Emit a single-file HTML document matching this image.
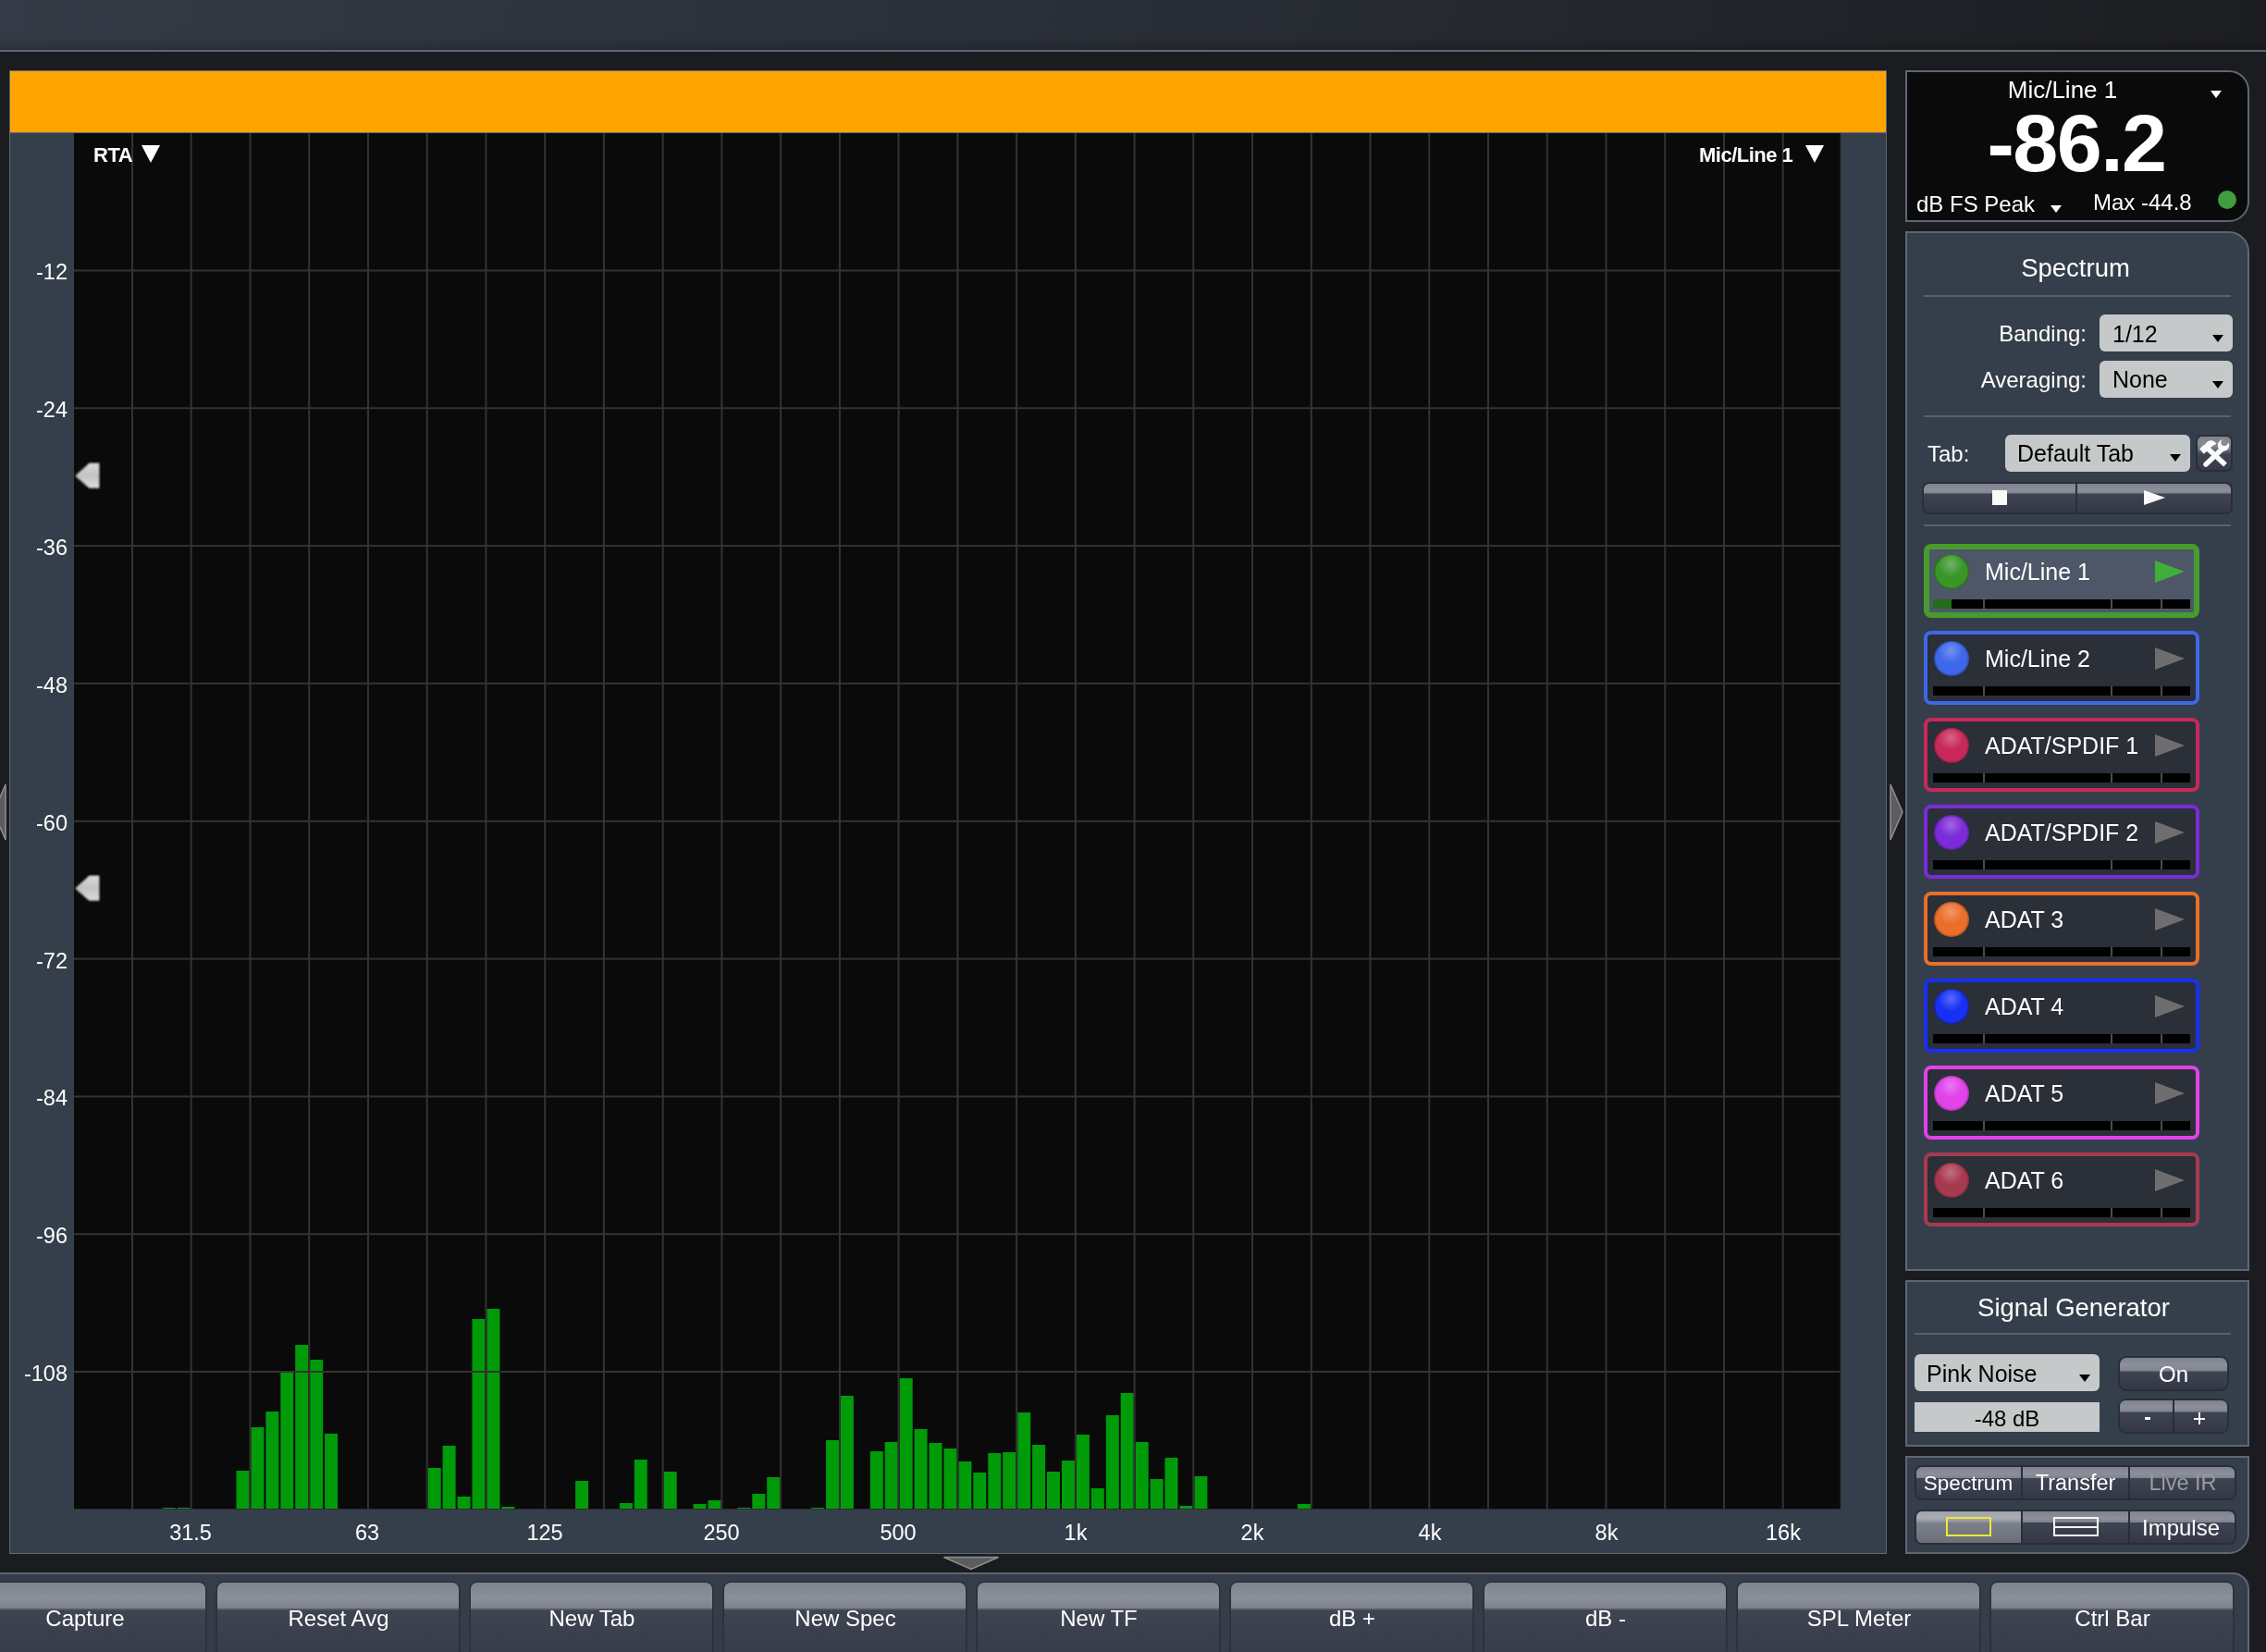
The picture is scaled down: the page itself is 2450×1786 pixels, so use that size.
<!DOCTYPE html>
<html><head><meta charset="utf-8"><style>
*{margin:0;padding:0;box-sizing:border-box}
html,body{width:2450px;height:1786px;overflow:hidden;background:#1b1c20;font-family:"Liberation Sans",sans-serif;color:#fff}
.abs{position:absolute}
.t{position:absolute;white-space:nowrap;will-change:transform}
#top{position:absolute;left:0;top:0;width:2450px;height:54px;background:linear-gradient(rgba(0,0,0,0) 75%,rgba(0,0,0,.18) 100%),linear-gradient(100deg,#343b46 0%,#2a2f38 45%,#1c1d21 100%)}
#topline{position:absolute;left:0;top:54px;width:2450px;height:2px;background:#5e6672}
#graph{position:absolute;left:10px;top:76px;width:2030px;height:1604px;background:#353f4b;border:1px solid #5d6875}
#orange{position:absolute;left:11px;top:77px;width:2028px;height:66px;background:#ffa400}
#oline{position:absolute;left:11px;top:143px;width:2028px;height:1px;background:#5d6875}
.tri{position:absolute;width:0;height:0;border-left:10px solid transparent;border-right:10px solid transparent;border-top:19px solid #fff}
#meter{position:absolute;left:2060px;top:76px;width:372px;height:164px;background:#0a0a0a;border:2px solid #5f6773;border-radius:0 22px 22px 0}
.panel{position:absolute;left:2060px;width:372px;background:#353f4b;border:2px solid #5f6773}
.sep{position:absolute;height:2px;background:#56616d}
.dd{position:absolute;background:#c6c9ca;border-radius:6px}
.ddt{position:absolute;width:0;height:0;border-left:6px solid transparent;border-right:6px solid transparent;border-top:8px solid #000}
.ddtw{position:absolute;width:0;height:0;border-left:6px solid transparent;border-right:6px solid transparent;border-top:8px solid #fff}
.ch{position:absolute;left:2080px;width:298px;height:80px;border:4px solid;border-radius:8px;background:#2a2f38}
.ch.sel{border-width:6px;background:#4d5767}
.dot{position:absolute;left:7px;top:7px;width:38px;height:38px;border-radius:50%;box-shadow:inset 0 0 1px 1.5px rgba(0,0,0,.22),0 0 1px rgba(0,0,0,.3)}
.ch.sel .dot{left:5px;top:5px}
.play{position:absolute;left:246px;top:14px;width:0;height:0;border-top:12px solid transparent;border-bottom:12px solid transparent;border-left:32px solid #6e6e6e}
.play.g{border-left-color:#3fae3a;left:244px;top:12px}
.meter{position:absolute;left:6px;top:56px;width:278px;height:10px;background:#000}
.ch.sel .meter{left:4px;top:54px}
.meter i{position:absolute;top:0;width:2px;height:10px;background:#4a4d52}
.lvl{position:absolute;left:0;top:0;width:20px;height:10px;background:#256b1c}
.gb{position:absolute;--hl:14px;background:linear-gradient(#7f838d 0,#8b8f99 calc(var(--hl)*.55),#80848e var(--hl),#3f4452 calc(var(--hl) + 1px),#343846 100%);border:2px solid #2a2e39}
.gb.sel{background:linear-gradient(#9a9ea8 0,#a6aab2 calc(var(--hl)*.55),#8e929b var(--hl),#7d818b calc(var(--hl) + 1px),#6a6e78 100%)}
.gbox{position:absolute;background:#2a2e39;overflow:hidden;padding:0}
.seg{position:absolute;top:2px;bottom:2px;--hl:14px;background:linear-gradient(#7f838d 0,#8b8f99 calc(var(--hl)*.55),#80848e calc(var(--hl) - 2px),#3f4452 calc(var(--hl) - 1px),#343846 100%)}
.seg:first-child{border-radius:6px 0 0 6px}
.seg:last-child{border-radius:0 6px 6px 0}
.seg.sel{background:linear-gradient(#a0a4ac 0,#a8acb4 calc(var(--hl)*.55),#8e929b calc(var(--hl) - 2px),#7c808a calc(var(--hl) - 1px),#6b6f79 100%)}
.tbtn{position:absolute;top:1711px;width:261px;height:90px;border-radius:7px 7px 0 0;background:linear-gradient(#7f838d 0px,#8b8f99 16px,#80848e 27px,#3f4452 30px,#363a48 90px);box-shadow:0 0 0 1.5px #2a2f3a}
</style></head><body>
<div id="top"></div><div id="topline"></div>
<div id="graph"></div>
<div id="orange"></div><div id="oline"></div>
<svg width="2450" height="1786" style="position:absolute;left:0;top:0">
<rect x="80" y="144" width="1910" height="1487" fill="#0a0a0a"/>
<rect x="80" y="1631" width="1910" height="1" fill="#2c2c2c"/>
<rect x="1989.5" y="144" width="1.5" height="1487.5" fill="#333"/>
<rect x="175.8" y="1630" width="14" height="1" fill="#009b08"/>
<rect x="191.8" y="1630" width="14" height="1" fill="#009b08"/>
<rect x="255.5" y="1590" width="14" height="41" fill="#009b08"/>
<rect x="271.4" y="1543" width="14" height="88" fill="#009b08"/>
<rect x="287.4" y="1526" width="14" height="105" fill="#009b08"/>
<rect x="303.3" y="1484" width="14" height="147" fill="#009b08"/>
<rect x="319.2" y="1454" width="14" height="177" fill="#009b08"/>
<rect x="335.2" y="1470" width="14" height="161" fill="#009b08"/>
<rect x="351.1" y="1550" width="14" height="81" fill="#009b08"/>
<rect x="462.7" y="1587" width="14" height="44" fill="#009b08"/>
<rect x="478.6" y="1563" width="14" height="68" fill="#009b08"/>
<rect x="494.6" y="1618" width="14" height="13" fill="#009b08"/>
<rect x="510.5" y="1426" width="14" height="205" fill="#009b08"/>
<rect x="526.4" y="1415" width="14" height="216" fill="#009b08"/>
<rect x="542.4" y="1629" width="14" height="2" fill="#009b08"/>
<rect x="622.1" y="1601" width="14" height="30" fill="#009b08"/>
<rect x="669.9" y="1625" width="14" height="6" fill="#009b08"/>
<rect x="685.8" y="1578" width="14" height="53" fill="#009b08"/>
<rect x="717.7" y="1591" width="14" height="40" fill="#009b08"/>
<rect x="749.5" y="1626" width="14" height="5" fill="#009b08"/>
<rect x="765.5" y="1622" width="14" height="9" fill="#009b08"/>
<rect x="797.4" y="1630" width="14" height="1" fill="#009b08"/>
<rect x="813.3" y="1615" width="14" height="16" fill="#009b08"/>
<rect x="829.2" y="1597" width="14" height="34" fill="#009b08"/>
<rect x="877.0" y="1630" width="14" height="1" fill="#009b08"/>
<rect x="893.0" y="1557" width="14" height="74" fill="#009b08"/>
<rect x="908.9" y="1509" width="14" height="122" fill="#009b08"/>
<rect x="940.8" y="1569" width="14" height="62" fill="#009b08"/>
<rect x="956.7" y="1559" width="14" height="72" fill="#009b08"/>
<rect x="972.7" y="1490" width="14" height="141" fill="#009b08"/>
<rect x="988.6" y="1545" width="14" height="86" fill="#009b08"/>
<rect x="1004.5" y="1560" width="14" height="71" fill="#009b08"/>
<rect x="1020.5" y="1566" width="14" height="65" fill="#009b08"/>
<rect x="1036.4" y="1580" width="14" height="51" fill="#009b08"/>
<rect x="1052.3" y="1592" width="14" height="39" fill="#009b08"/>
<rect x="1068.3" y="1571" width="14" height="60" fill="#009b08"/>
<rect x="1084.2" y="1570" width="14" height="61" fill="#009b08"/>
<rect x="1100.2" y="1527" width="14" height="104" fill="#009b08"/>
<rect x="1116.1" y="1562" width="14" height="69" fill="#009b08"/>
<rect x="1132.0" y="1591" width="14" height="40" fill="#009b08"/>
<rect x="1148.0" y="1579" width="14" height="52" fill="#009b08"/>
<rect x="1163.9" y="1551" width="14" height="80" fill="#009b08"/>
<rect x="1179.8" y="1609" width="14" height="22" fill="#009b08"/>
<rect x="1195.8" y="1530" width="14" height="101" fill="#009b08"/>
<rect x="1211.7" y="1506" width="14" height="125" fill="#009b08"/>
<rect x="1227.7" y="1559" width="14" height="72" fill="#009b08"/>
<rect x="1243.6" y="1599" width="14" height="32" fill="#009b08"/>
<rect x="1259.5" y="1576" width="14" height="55" fill="#009b08"/>
<rect x="1275.5" y="1628" width="14" height="3" fill="#009b08"/>
<rect x="1291.4" y="1596" width="14" height="35" fill="#009b08"/>
<rect x="1403.0" y="1626" width="14" height="5" fill="#009b08"/>
<rect x="142.0" y="144" width="2" height="1487" fill="#333"/>
<rect x="205.7" y="144" width="2" height="1487" fill="#333"/>
<rect x="269.5" y="144" width="2" height="1487" fill="#333"/>
<rect x="333.2" y="144" width="2" height="1487" fill="#333"/>
<rect x="397.0" y="144" width="2" height="1487" fill="#333"/>
<rect x="460.7" y="144" width="2" height="1487" fill="#333"/>
<rect x="524.4" y="144" width="2" height="1487" fill="#333"/>
<rect x="588.2" y="144" width="2" height="1487" fill="#333"/>
<rect x="651.9" y="144" width="2" height="1487" fill="#333"/>
<rect x="715.7" y="144" width="2" height="1487" fill="#333"/>
<rect x="779.4" y="144" width="2" height="1487" fill="#333"/>
<rect x="843.1" y="144" width="2" height="1487" fill="#333"/>
<rect x="906.9" y="144" width="2" height="1487" fill="#333"/>
<rect x="970.6" y="144" width="2" height="1487" fill="#333"/>
<rect x="1034.4" y="144" width="2" height="1487" fill="#333"/>
<rect x="1098.1" y="144" width="2" height="1487" fill="#333"/>
<rect x="1161.8" y="144" width="2" height="1487" fill="#333"/>
<rect x="1225.6" y="144" width="2" height="1487" fill="#333"/>
<rect x="1289.3" y="144" width="2" height="1487" fill="#333"/>
<rect x="1353.1" y="144" width="2" height="1487" fill="#333"/>
<rect x="1416.8" y="144" width="2" height="1487" fill="#333"/>
<rect x="1480.5" y="144" width="2" height="1487" fill="#333"/>
<rect x="1544.3" y="144" width="2" height="1487" fill="#333"/>
<rect x="1608.0" y="144" width="2" height="1487" fill="#333"/>
<rect x="1671.8" y="144" width="2" height="1487" fill="#333"/>
<rect x="1735.5" y="144" width="2" height="1487" fill="#333"/>
<rect x="1799.2" y="144" width="2" height="1487" fill="#333"/>
<rect x="1863.0" y="144" width="2" height="1487" fill="#333"/>
<rect x="1926.7" y="144" width="2" height="1487" fill="#333"/>
<rect x="80" y="291.5" width="1910" height="2" fill="#333"/>
<rect x="80" y="440.3" width="1910" height="2" fill="#333"/>
<rect x="80" y="589.1" width="1910" height="2" fill="#333"/>
<rect x="80" y="737.9" width="1910" height="2" fill="#333"/>
<rect x="80" y="886.8" width="1910" height="2" fill="#333"/>
<rect x="80" y="1035.6" width="1910" height="2" fill="#333"/>
<rect x="80" y="1184.4" width="1910" height="2" fill="#333"/>
<rect x="80" y="1333.2" width="1910" height="2" fill="#333"/>
<rect x="80" y="1482.0" width="1910" height="2" fill="#333"/>
<defs><filter id="bl" x="-20%" y="-20%" width="140%" height="140%"><feGaussianBlur stdDeviation="1.1"/></filter><linearGradient id="mk" x1="0" y1="0" x2="0" y2="1"><stop offset="0" stop-color="#dcdcdc"/><stop offset=".5" stop-color="#c2c2c2"/><stop offset="1" stop-color="#dedede"/></linearGradient></defs>
<polygon points="81,514.5 96.5,500.5 107.5,500.5 107.5,528 96.5,528" fill="url(#mk)" stroke="#000" stroke-width="1" filter="url(#bl)"/>
<polygon points="81,960.5 96.5,946.5 107.5,946.5 107.5,974 96.5,974" fill="url(#mk)" stroke="#000" stroke-width="1" filter="url(#bl)"/>
<polygon points="-7,878 6,848 6,908" fill="#5c5c5e" stroke="#8e8e8e" stroke-width="1.5"/>
<polygon points="2057,878 2044,848 2044,908" fill="#5c5c5e" stroke="#8e8e8e" stroke-width="1.5"/>
<polygon points="1020.5,1683.5 1079.5,1683.5 1050,1696.5" fill="#5c5c5e" stroke="#8e8e8e" stroke-width="1.5"/>
</svg>
<div class="t" style="left:2.5px;width:70px;text-align:right;top:283.4px;font-size:23.5px;line-height:23.5px;color:#fff;">-12</div>
<div class="t" style="left:2.5px;width:70px;text-align:right;top:432.2px;font-size:23.5px;line-height:23.5px;color:#fff;">-24</div>
<div class="t" style="left:2.5px;width:70px;text-align:right;top:581.0px;font-size:23.5px;line-height:23.5px;color:#fff;">-36</div>
<div class="t" style="left:2.5px;width:70px;text-align:right;top:729.8px;font-size:23.5px;line-height:23.5px;color:#fff;">-48</div>
<div class="t" style="left:2.5px;width:70px;text-align:right;top:878.7px;font-size:23.5px;line-height:23.5px;color:#fff;">-60</div>
<div class="t" style="left:2.5px;width:70px;text-align:right;top:1027.5px;font-size:23.5px;line-height:23.5px;color:#fff;">-72</div>
<div class="t" style="left:2.5px;width:70px;text-align:right;top:1176.3px;font-size:23.5px;line-height:23.5px;color:#fff;">-84</div>
<div class="t" style="left:2.5px;width:70px;text-align:right;top:1325.1px;font-size:23.5px;line-height:23.5px;color:#fff;">-96</div>
<div class="t" style="left:2.5px;width:70px;text-align:right;top:1473.9px;font-size:23.5px;line-height:23.5px;color:#fff;">-108</div>
<div class="t" style="left:156.0px;width:100px;text-align:center;top:1646.1px;font-size:23.5px;line-height:23.5px;color:#fff;">31.5</div>
<div class="t" style="left:347.4px;width:100px;text-align:center;top:1646.1px;font-size:23.5px;line-height:23.5px;color:#fff;">63</div>
<div class="t" style="left:538.7px;width:100px;text-align:center;top:1646.1px;font-size:23.5px;line-height:23.5px;color:#fff;">125</div>
<div class="t" style="left:730.0px;width:100px;text-align:center;top:1646.1px;font-size:23.5px;line-height:23.5px;color:#fff;">250</div>
<div class="t" style="left:921.4px;width:100px;text-align:center;top:1646.1px;font-size:23.5px;line-height:23.5px;color:#fff;">500</div>
<div class="t" style="left:1112.8px;width:100px;text-align:center;top:1646.1px;font-size:23.5px;line-height:23.5px;color:#fff;">1k</div>
<div class="t" style="left:1304.1px;width:100px;text-align:center;top:1646.1px;font-size:23.5px;line-height:23.5px;color:#fff;">2k</div>
<div class="t" style="left:1495.5px;width:100px;text-align:center;top:1646.1px;font-size:23.5px;line-height:23.5px;color:#fff;">4k</div>
<div class="t" style="left:1686.8px;width:100px;text-align:center;top:1646.1px;font-size:23.5px;line-height:23.5px;color:#fff;">8k</div>
<div class="t" style="left:1878.1px;width:100px;text-align:center;top:1646.1px;font-size:23.5px;line-height:23.5px;color:#fff;">16k</div>
<div class="t" style="left:100.5px;top:156.9px;font-size:22px;line-height:22px;color:#fff;font-weight:bold;letter-spacing:-0.5px">RTA</div>
<div class="tri" style="left:153px;top:157px"></div>
<div class="t" style="left:1837.0px;top:156.9px;font-size:22px;line-height:22px;color:#fff;font-weight:bold;letter-spacing:-0.5px">Mic/Line 1</div>
<div class="tri" style="left:1952px;top:157px"></div>
<div id="meter"></div>
<div class="t" style="left:2080.0px;width:300px;text-align:center;top:84.0px;font-size:26px;line-height:26px;color:#fff;">Mic/Line 1</div>
<div class="ddtw" style="left:2390px;top:98px"></div>
<div class="t" style="left:2075.0px;width:340px;text-align:center;top:110.5px;font-size:88px;line-height:88px;color:#fff;font-weight:bold;letter-spacing:-1.5px">-86.2</div>
<div class="t" style="left:2072.0px;top:208.7px;font-size:24px;line-height:24px;color:#fff;">dB FS Peak</div>
<div class="ddtw" style="left:2217px;top:222px"></div>
<div class="t" style="left:2263.0px;top:206.7px;font-size:24px;line-height:24px;color:#fff;">Max -44.8</div>
<div class="abs" style="left:2398px;top:206px;width:20px;height:20px;border-radius:50%;background:#3f9c3f"></div>
<div class="panel" style="top:250px;height:1124px;border-radius:0 22px 0 0"></div>
<div class="t" style="left:2093.5px;width:300px;text-align:center;top:276.4px;font-size:27.5px;line-height:27.5px;color:#fff;">Spectrum</div>
<div class="sep" style="left:2080px;top:319px;width:332px"></div>
<div class="t" style="left:2056.0px;width:200px;text-align:right;top:348.7px;font-size:24px;line-height:24px;color:#fff;">Banding:</div>
<div class="dd" style="left:2270px;top:340px;width:144px;height:40px"></div>
<div class="t" style="left:2284.0px;top:348.6px;font-size:25px;line-height:25px;color:#000;">1/12</div>
<div class="ddt" style="left:2392px;top:362px"></div>
<div class="t" style="left:2056.0px;width:200px;text-align:right;top:398.7px;font-size:24px;line-height:24px;color:#fff;">Averaging:</div>
<div class="dd" style="left:2270px;top:390px;width:144px;height:40px"></div>
<div class="t" style="left:2284.0px;top:398.4px;font-size:25px;line-height:25px;color:#000;">None</div>
<div class="ddt" style="left:2392px;top:412px"></div>
<div class="sep" style="left:2080px;top:449px;width:332px"></div>
<div class="t" style="left:2084.0px;top:478.7px;font-size:24px;line-height:24px;color:#fff;">Tab:</div>
<div class="dd" style="left:2168px;top:470px;width:200px;height:40px"></div>
<div class="t" style="left:2181.0px;top:477.8px;font-size:25px;line-height:25px;color:#000;">Default Tab</div>
<div class="ddt" style="left:2346px;top:491px"></div>
<div class="abs" style="left:2374px;top:470px;width:40px;height:40px;border-radius:7px;border:2px solid #2a2e39;background:linear-gradient(#7f838d 0,#888c96 8px,#6e727d 14px,#3f4452 19px,#363a48 100%)"></div>
<svg class="abs" style="left:2374px;top:470px" width="40" height="40" viewBox="0 0 40 40">
<defs><mask id="wm"><rect width="40" height="40" fill="#fff"/><circle cx="31" cy="8.5" r="3.6" fill="#000"/><polygon points="31,8.5 40,3 40,10" fill="#000"/></mask></defs>
<line x1="13" y1="15" x2="32" y2="32.5" stroke="#fafafa" stroke-width="5.5"/>
<polygon points="4.2,15.3 8.8,20.8 17,13 22.5,9.8 20,7.2 16.5,6 12.5,7.5 10,10.5 8,11.5" fill="#fafafa"/>
<line x1="11" y1="32" x2="29" y2="15" stroke="#fafafa" stroke-width="5.5" stroke-linecap="round"/>
<circle cx="30" cy="11.5" r="6.2" fill="#fafafa" mask="url(#wm)"/>
</svg>
<div class="gbox" style="left:2078px;top:521px;width:336px;height:35px;border-radius:7px"><div class="seg" style="left:2px;width:164px;--hl:12px"></div><div class="seg" style="left:168px;width:166px;--hl:12px"></div></div>
<div class="abs" style="left:2154px;top:530px;width:16px;height:16px;background:#fafafa"></div>
<div class="abs" style="left:2318px;top:530px;width:0;height:0;border-top:8.3px solid transparent;border-bottom:8.3px solid transparent;border-left:23.5px solid #fafafa"></div>
<div class="sep" style="left:2080px;top:567px;width:332px"></div>
<div class="ch sel" style="top:588px;border-color:#479c2d"><div class="dot" style="background:radial-gradient(circle at 48% 28%, rgba(255,255,255,.28) 0, rgba(255,255,255,0) 40%), #3b962a"></div><div class="play g"></div><div class="meter"><div class="lvl"></div><i style="left:53.5px"></i><i style="left:191.5px"></i><i style="left:245.5px"></i></div></div>
<div class="t" style="left:2146.0px;top:606.3px;font-size:25px;line-height:25px;color:#fff;">Mic/Line 1</div>
<div class="ch" style="top:682px;border-color:#3e67ea"><div class="dot" style="background:radial-gradient(circle at 48% 28%, rgba(255,255,255,.28) 0, rgba(255,255,255,0) 40%), #3e67ea"></div><div class="play"></div><div class="meter"><i style="left:53.5px"></i><i style="left:191.5px"></i><i style="left:245.5px"></i></div></div>
<div class="t" style="left:2146.0px;top:700.3px;font-size:25px;line-height:25px;color:#fff;">Mic/Line 2</div>
<div class="ch" style="top:776px;border-color:#c8285a"><div class="dot" style="background:radial-gradient(circle at 48% 28%, rgba(255,255,255,.28) 0, rgba(255,255,255,0) 40%), #c8285a"></div><div class="play"></div><div class="meter"><i style="left:53.5px"></i><i style="left:191.5px"></i><i style="left:245.5px"></i></div></div>
<div class="t" style="left:2146.0px;top:794.3px;font-size:25px;line-height:25px;color:#fff;">ADAT/SPDIF 1</div>
<div class="ch" style="top:870px;border-color:#7b2bd8"><div class="dot" style="background:radial-gradient(circle at 48% 28%, rgba(255,255,255,.28) 0, rgba(255,255,255,0) 40%), #7b2bd8"></div><div class="play"></div><div class="meter"><i style="left:53.5px"></i><i style="left:191.5px"></i><i style="left:245.5px"></i></div></div>
<div class="t" style="left:2146.0px;top:888.3px;font-size:25px;line-height:25px;color:#fff;">ADAT/SPDIF 2</div>
<div class="ch" style="top:964px;border-color:#e96f2b"><div class="dot" style="background:radial-gradient(circle at 48% 28%, rgba(255,255,255,.28) 0, rgba(255,255,255,0) 40%), #e96f2b"></div><div class="play"></div><div class="meter"><i style="left:53.5px"></i><i style="left:191.5px"></i><i style="left:245.5px"></i></div></div>
<div class="t" style="left:2146.0px;top:982.3px;font-size:25px;line-height:25px;color:#fff;">ADAT 3</div>
<div class="ch" style="top:1058px;border-color:#1830f4"><div class="dot" style="background:radial-gradient(circle at 48% 28%, rgba(255,255,255,.28) 0, rgba(255,255,255,0) 40%), #1830f4"></div><div class="play"></div><div class="meter"><i style="left:53.5px"></i><i style="left:191.5px"></i><i style="left:245.5px"></i></div></div>
<div class="t" style="left:2146.0px;top:1076.3px;font-size:25px;line-height:25px;color:#fff;">ADAT 4</div>
<div class="ch" style="top:1152px;border-color:#e142ea"><div class="dot" style="background:radial-gradient(circle at 48% 28%, rgba(255,255,255,.28) 0, rgba(255,255,255,0) 40%), #e142ea"></div><div class="play"></div><div class="meter"><i style="left:53.5px"></i><i style="left:191.5px"></i><i style="left:245.5px"></i></div></div>
<div class="t" style="left:2146.0px;top:1170.3px;font-size:25px;line-height:25px;color:#fff;">ADAT 5</div>
<div class="ch" style="top:1246px;border-color:#a83a50"><div class="dot" style="background:radial-gradient(circle at 48% 28%, rgba(255,255,255,.28) 0, rgba(255,255,255,0) 40%), #a83a50"></div><div class="play"></div><div class="meter"><i style="left:53.5px"></i><i style="left:191.5px"></i><i style="left:245.5px"></i></div></div>
<div class="t" style="left:2146.0px;top:1264.3px;font-size:25px;line-height:25px;color:#fff;">ADAT 6</div>
<div class="panel" style="top:1384px;height:180px"></div>
<div class="t" style="left:2072.0px;width:340px;text-align:center;top:1399.7px;font-size:27.5px;line-height:27.5px;color:#fff;">Signal Generator</div>
<div class="sep" style="left:2070px;top:1441px;width:342px"></div>
<div class="dd" style="left:2070px;top:1464px;width:200px;height:40px"></div>
<div class="t" style="left:2083.0px;top:1472.8px;font-size:25px;line-height:25px;color:#000;">Pink Noise</div>
<div class="ddt" style="left:2248px;top:1486px"></div>
<div class="abs" style="left:2070px;top:1516px;width:200px;height:32px;background:#c6c9ca"></div>
<div class="t" style="left:2070.0px;width:200px;text-align:center;top:1521.7px;font-size:24px;line-height:24px;color:#000;">-48 dB</div>
<div class="gb" style="left:2290px;top:1466px;width:120px;height:38px;border-radius:9px;--hl:14px"></div>
<div class="t" style="left:2290.0px;width:120px;text-align:center;top:1473.7px;font-size:24px;line-height:24px;color:#fff;">On</div>
<div class="gbox" style="left:2290px;top:1512px;width:120px;height:38px;border-radius:9px"><div class="seg" style="left:2px;width:57px;--hl:14px"></div><div class="seg" style="left:61px;width:57px;--hl:14px"></div></div>
<div class="abs" style="left:2319px;top:1531.5px;width:6px;height:3px;background:#fafafa"></div>
<div class="abs" style="left:2372px;top:1532.5px;width:12px;height:2px;background:#fafafa"></div>
<div class="abs" style="left:2377px;top:1527px;width:2px;height:13px;background:#fafafa"></div>
<div class="panel" style="top:1574px;height:106px;border-radius:0 0 22px 0"></div>
<div class="gbox" style="left:2070px;top:1584px;width:348px;height:38px;border-radius:8px"><div class="seg" style="left:2px;width:113px;--hl:13.5px"></div><div class="seg" style="left:117px;width:114px;--hl:13.5px"></div><div class="seg" style="left:233px;width:113px;--hl:13.5px"></div></div>
<div class="t" style="left:2070.0px;width:116px;text-align:center;top:1593.3px;font-size:22.5px;line-height:22.5px;color:#fff;">Spectrum</div>
<div class="t" style="left:2186.0px;width:116px;text-align:center;top:1592.4px;font-size:23.5px;line-height:23.5px;color:#fff;">Transfer</div>
<div class="t" style="left:2302.0px;width:116px;text-align:center;top:1592.4px;font-size:23.5px;line-height:23.5px;color:#9a9ca2;">Live IR</div>
<div class="gbox" style="left:2070px;top:1632px;width:348px;height:38px;border-radius:8px"><div class="seg sel" style="left:2px;width:113px;--hl:13.5px"></div><div class="seg" style="left:117px;width:114px;--hl:13.5px"></div><div class="seg" style="left:233px;width:113px;--hl:13.5px"></div></div>
<div class="t" style="left:2300.0px;width:116px;text-align:center;top:1640.0px;font-size:24px;line-height:24px;color:#fff;">Impulse</div>
<div class="abs" style="left:2104px;top:1640px;width:49px;height:21px;border:2px solid #f0e836"></div>
<div class="abs" style="left:2220px;top:1640px;width:49px;height:21px;border:2px solid #f4f4f4"></div>
<div class="abs" style="left:2220px;top:1649.5px;width:49px;height:2px;background:#f4f4f4"></div>
<div class="abs" style="left:0;top:1700px;width:2432px;height:86px;background:#343d48;border-top:2px solid #5d6875;border-right:2px solid #5d6875;border-radius:0 18px 0 0"></div>
<div class="tbtn" style="left:-39px"></div>
<div class="t" style="left:-38.5px;width:260px;text-align:center;top:1738.3px;font-size:24px;line-height:24px;color:#fff;">Capture</div>
<div class="tbtn" style="left:235px"></div>
<div class="t" style="left:235.5px;width:260px;text-align:center;top:1738.3px;font-size:24px;line-height:24px;color:#fff;">Reset Avg</div>
<div class="tbtn" style="left:509px"></div>
<div class="t" style="left:509.5px;width:260px;text-align:center;top:1738.3px;font-size:24px;line-height:24px;color:#fff;">New Tab</div>
<div class="tbtn" style="left:783px"></div>
<div class="t" style="left:783.5px;width:260px;text-align:center;top:1738.3px;font-size:24px;line-height:24px;color:#fff;">New Spec</div>
<div class="tbtn" style="left:1057px"></div>
<div class="t" style="left:1057.5px;width:260px;text-align:center;top:1738.3px;font-size:24px;line-height:24px;color:#fff;">New TF</div>
<div class="tbtn" style="left:1331px"></div>
<div class="t" style="left:1331.5px;width:260px;text-align:center;top:1738.3px;font-size:24px;line-height:24px;color:#fff;">dB +</div>
<div class="tbtn" style="left:1605px"></div>
<div class="t" style="left:1605.5px;width:260px;text-align:center;top:1738.3px;font-size:24px;line-height:24px;color:#fff;">dB -</div>
<div class="tbtn" style="left:1879px"></div>
<div class="t" style="left:1879.5px;width:260px;text-align:center;top:1738.3px;font-size:24px;line-height:24px;color:#fff;">SPL Meter</div>
<div class="tbtn" style="left:2153px"></div>
<div class="t" style="left:2153.5px;width:260px;text-align:center;top:1738.3px;font-size:24px;line-height:24px;color:#fff;">Ctrl Bar</div>
</body></html>
